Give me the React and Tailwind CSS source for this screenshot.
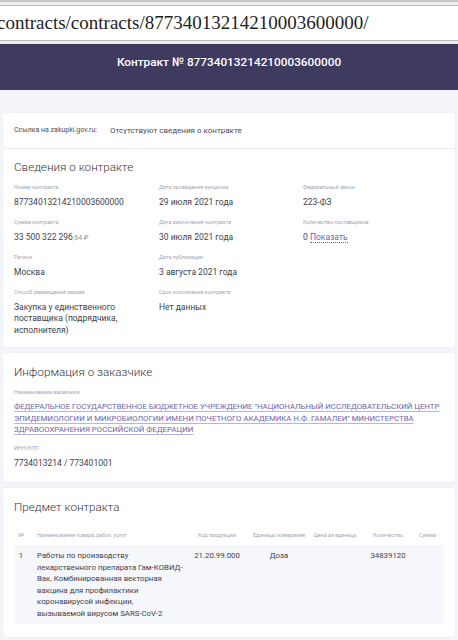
import React from 'react';

const roboto = { fontFamily: 'Roboto, "Noto Sans", sans-serif' };

const fields = [
  [
    { label: 'Номер контракта', value: '87734013214210003600000' },
    { label: 'Дата проведения аукциона', value: '29 июля 2021 года' },
    { label: 'Федеральный закон', value: '223-ФЗ' },
  ],
  [
    {
      label: 'Сумма контракта',
      value: (
        <>
          33 500 322 296<span className="text-[7px] text-[#8d8fa0]">,64 ₽</span>
        </>
      ),
    },
    { label: 'Дата заключения контракта', value: '30 июля 2021 года' },
    {
      label: 'Количество поставщиков',
      value: (
        <>
          0{' '}
          <span className="text-[#6d64ab] border-b border-dotted border-[#6d64ab]">Показать</span>
        </>
      ),
    },
  ],
  [
    { label: 'Регион', value: 'Москва' },
    { label: 'Дата публикации', value: '3 августа 2021 года' },
    null,
  ],
  [
    { label: 'Способ размещения заказа', value: 'Закупка у единственного поставщика (подрядчика, исполнителя)', narrow: true },
    { label: 'Срок исполнения контракта', value: 'Нет данных' },
    null,
  ],
];

const columns = [
  { title: '№', w: 'w-[14px]', left: false },
  { title: 'Наименование товара, работ, услуг', w: 'w-[162px]', left: true },
  { title: 'Код продукции', w: 'w-[54px]', left: false },
  { title: 'Единицы измерения', w: 'w-[70px]', left: false },
  { title: 'Цена за единицу', w: 'w-[42px]', left: false },
  { title: 'Количество', w: 'w-[64px]', left: false },
  { title: 'Сумма', w: 'w-[15px]', left: false },
];

const row = [
  '1',
  <>
    Работы по производству лекарственного препарата Гам-КОВИД-Вак, Комбинированная векторная вакцина для
    профилактики коронавирусой инфекции,
    <br />
    вызываемой вирусом SARS-CoV-2
  </>,
  '21.20.99.000',
  'Доза',
  '',
  '34839120',
  '',
];

function Field({ label, value, narrow }) {
  return (
    <div className="flex flex-col">
      <span className="text-[5.4px] leading-[8px] text-[#a3a5b4] whitespace-nowrap">{label}</span>
      <span className={`mt-[6px] text-[8.5px] leading-[11.5px] text-[#3e3f4d] ${narrow ? 'max-w-[108px]' : ''}`}>
        {value}
      </span>
    </div>
  );
}

function Card({ className = '', children }) {
  return (
    <div className={`bg-white mx-[3px] rounded-[2px] shadow-[0_0_2px_rgba(40,50,90,0.08)] ${className}`}>
      {children}
    </div>
  );
}

function CardTitle({ children }) {
  return <h2 className="text-[11.7px] leading-[16px] font-light text-[#343440]">{children}</h2>;
}

export default function App() {
  return (
    <div className="w-[458px] h-[640px] overflow-hidden bg-[#f3f5fa]" style={roboto}>
      {/* browser address bar */}
      <div className="h-[44px] bg-[#ececec] border-t-[2px] border-[#c6c6c6] pt-[3px]">
        <div className="h-[36px] bg-white border-y border-[#bdbdbd] flex items-center overflow-hidden">
          <span
            className="-ml-[3px] text-[19px] text-[#1e1e1e] whitespace-nowrap"
            style={{ fontFamily: '"Liberation Serif", "Times New Roman", serif' }}
          >
            contracts/contracts/87734013214210003600000/
          </span>
        </div>
      </div>

      {/* page header */}
      <div className="h-[46px] bg-[#3f3a5f] flex items-start justify-center pt-[10px]">
        <h1 className="text-[11.8px] leading-[16px] font-medium text-white">Контракт № 87734013214210003600000</h1>
      </div>

      <div className="pt-[23px] flex flex-col">
        <Card className="h-[35px] px-[11px] flex items-center gap-[13px] text-[8px] text-[#4a4b57]">
          <span className="text-[7px]">Ссылка на zakupki.gov.ru:</span>
          <span>Отсутствуют сведения о контракте</span>
        </Card>

        <Card className="mt-[1px] pt-[10px] pb-[11px] px-[11px]">
          <CardTitle>Сведения о контракте</CardTitle>
          <div className="mt-[8px] flex flex-col gap-[9px]">
            {fields.map((line, i) => (
              <div key={i} className="grid grid-cols-[145px_144px_1fr]">
                {line.map((f, j) => (f ? <Field key={j} {...f} /> : <div key={j} />))}
              </div>
            ))}
          </div>
        </Card>

        <Card className="mt-[6px] pt-[11px] pb-[13px] px-[11px]">
          <CardTitle>Информация о заказчике</CardTitle>
          <div className="mt-[8px] flex flex-col">
            <span className="text-[5.4px] leading-[8px] text-[#a3a5b4]">Наименование заказчика</span>
            <a className="mt-[5px] text-[7.8px] leading-[11.5px] text-[#6d64ab] underline decoration-[#b9b4dc] underline-offset-2">
              ФЕДЕРАЛЬНОЕ ГОСУДАРСТВЕННОЕ БЮДЖЕТНОЕ УЧРЕЖДЕНИЕ "НАЦИОНАЛЬНЫЙ ИССЛЕДОВАТЕЛЬСКИЙ ЦЕНТР
              ЭПИДЕМИОЛОГИИ И МИКРОБИОЛОГИИ ИМЕНИ ПОЧЕТНОГО АКАДЕМИКА Н.Ф. ГАМАЛЕИ" МИНИСТЕРСТВА
              ЗДРАВООХРАНЕНИЯ РОССИЙСКОЙ ФЕДЕРАЦИИ
            </a>
          </div>
          <div className="mt-[8px]">
            <Field label="ИНН/КПП" value="7734013214 / 773401001" />
          </div>
        </Card>

        <Card className="mt-[6px] pt-[11px] pb-[13px] px-[11px]">
          <CardTitle>Предмет контракта</CardTitle>
          <div className="mt-[16px] flex text-[5.4px] leading-[8px] text-[#a3a5b4]">
            {columns.map((c) => (
              <div
                key={c.title}
                className={`${c.w} shrink-0 whitespace-nowrap flex ${c.left ? 'justify-start pl-[9px]' : 'justify-center'}`}
              >
                {c.title}
              </div>
            ))}
          </div>
          <div className="mt-[6px] flex bg-[#f6f7fb] rounded-[2px] pt-[5px] pb-[4px] text-[7.8px] leading-[11.6px] text-[#3e3f4d]">
            {columns.map((c, i) => (
              <div
                key={c.title}
                className={`${c.w} shrink-0 ${c.left ? 'pl-[9px] pr-[5px]' : 'whitespace-nowrap flex justify-center'}`}
              >
                {row[i]}
              </div>
            ))}
          </div>
        </Card>
      </div>
    </div>
  );
}
